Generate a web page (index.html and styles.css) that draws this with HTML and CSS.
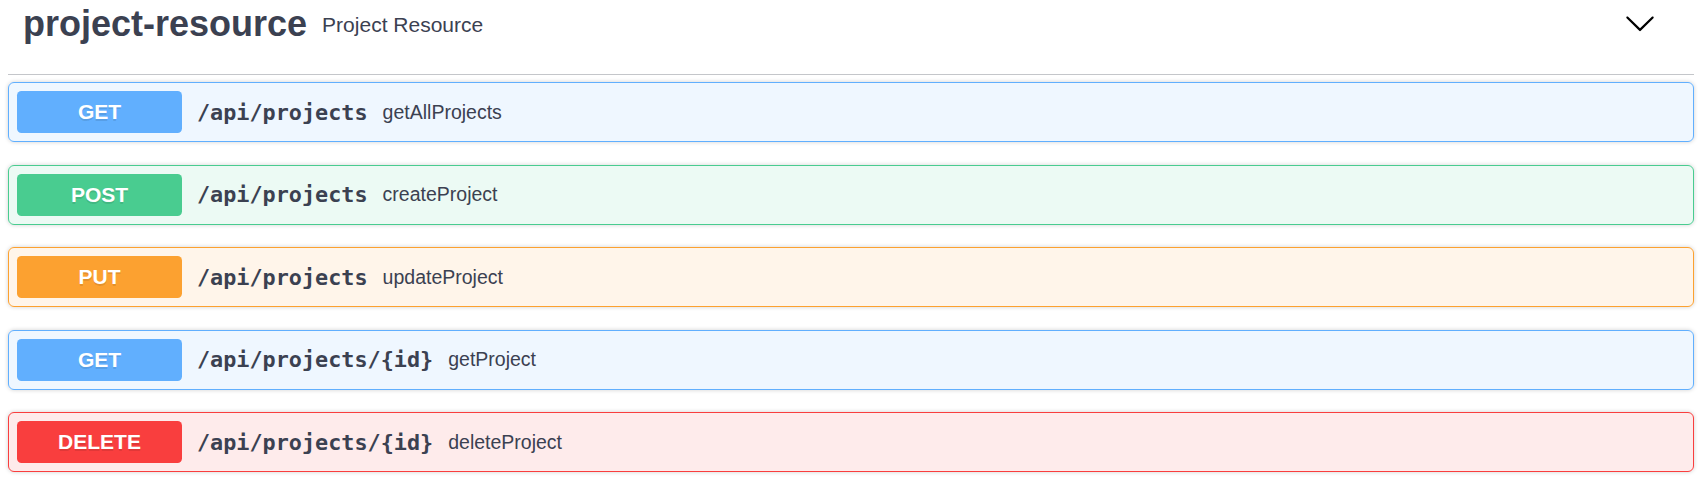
FILE: index.html
```html
<!DOCTYPE html>
<html lang="en">
<head>
<meta charset="utf-8">
<title>project-resource</title>
<link rel="stylesheet" href="styles.css">
</head>
<body>
<div class="wrapper">
  <section class="tag-section">
    <div class="tag">
      <div class="tag-title">
        <h3 class="tag-name">project-resource</h3>
        <small class="tag-desc">Project Resource</small>
      </div>
      <button class="expand" type="button" aria-label="Collapse">
        <svg class="arrow" viewBox="0 0 20 20" width="32" height="32" aria-hidden="true">
          <path d="M17.418 6.109c.272-.268.709-.268.979 0s.271.701 0 .969l-7.908 7.83c-.27.268-.707.268-.979 0l-7.908-7.830c-.27-.268-.27-.701 0-.969.271-.268.709-.268.979 0L10 13.25l7.418-7.141z"/>
        </svg>
      </button>
    </div>

    <div class="opblock opblock-get">
      <div class="summary">
        <span class="method">GET</span>
        <span class="path">/api/projects</span>
        <span class="desc">getAllProjects</span>
      </div>
    </div>

    <div class="opblock opblock-post">
      <div class="summary">
        <span class="method">POST</span>
        <span class="path">/api/projects</span>
        <span class="desc">createProject</span>
      </div>
    </div>

    <div class="opblock opblock-put">
      <div class="summary">
        <span class="method">PUT</span>
        <span class="path">/api/projects</span>
        <span class="desc">updateProject</span>
      </div>
    </div>

    <div class="opblock opblock-get">
      <div class="summary">
        <span class="method">GET</span>
        <span class="path">/api/projects/{id}</span>
        <span class="desc">getProject</span>
      </div>
    </div>

    <div class="opblock opblock-delete">
      <div class="summary">
        <span class="method">DELETE</span>
        <span class="path">/api/projects/{id}</span>
        <span class="desc">deleteProject</span>
      </div>
    </div>
  </section>
</div>
</body>
</html>
```
FILE: styles.css
```css
html, body {
  margin: 0;
  padding: 0;
  background: #ffffff;
}

.wrapper {
  padding: 0 8px;
  font-family: "Liberation Sans", Arial, sans-serif;
  color: #3b4151;
}

.tag {
  display: flex;
  align-items: flex-start;
  height: 74.5px;
  box-sizing: border-box;
  padding: 3.4px 30px 0 15px;
  border-bottom: 1px solid rgba(59, 65, 81, 0.3);
  margin-bottom: 7.5px;
}

.tag-title {
  flex: 1;
  display: flex;
  align-items: flex-start;
}

.tag-name {
  margin: 0;
  font-size: 36px;
  font-weight: 700;
  line-height: normal;
  color: #3b4151;
}

.tag-desc {
  font-size: 21px;
  font-weight: 400;
  line-height: normal;
  padding: 0 15px;
  margin-top: 9.9px;
  color: #3b4151;
}

.expand {
  border: none;
  background: none;
  padding: 0;
  margin: 3.2px 8px 0 0;
  cursor: pointer;
  line-height: 0;
}

.arrow {
  display: block;
  fill: #000000;
}

.opblock {
  border: 1px solid #000;
  border-radius: 6px;
  box-shadow: 0 0 4.5px rgba(0, 0, 0, 0.19);
  margin: 0 0 22.5px;
}

.summary {
  display: flex;
  align-items: center;
  padding: 8px;
}

.method {
  width: 165px;
  flex: none;
  padding: 9px 0;
  border-radius: 4.5px;
  color: #fff;
  font-family: "Liberation Sans", Arial, sans-serif;
  font-size: 21px;
  font-weight: 700;
  line-height: normal;
  text-align: center;
  text-shadow: 0 1.5px 0 rgba(0, 0, 0, 0.1);
}

.path {
  padding: 0 15px;
  font-family: "DejaVu Sans Mono", "Liberation Mono", monospace;
  font-size: 21.8px;
  font-weight: 700;
  color: #3b4151;
}

.desc {
  flex: 1;
  font-family: "Liberation Sans", Arial, sans-serif;
  font-size: 19.5px;
  color: #3b4151;
}

.opblock-get {
  border-color: #61affe;
  background: rgba(97, 175, 254, 0.1);
}
.opblock-get .method { background: #61affe; }

.opblock-post {
  border-color: #49cc90;
  background: rgba(73, 204, 144, 0.1);
}
.opblock-post .method { background: #49cc90; }

.opblock-put {
  border-color: #fca130;
  background: rgba(252, 161, 48, 0.1);
}
.opblock-put .method { background: #fca130; }

.opblock-delete {
  border-color: #f93e3e;
  background: rgba(249, 62, 62, 0.1);
}
.opblock-delete .method { background: #f93e3e; }
```
